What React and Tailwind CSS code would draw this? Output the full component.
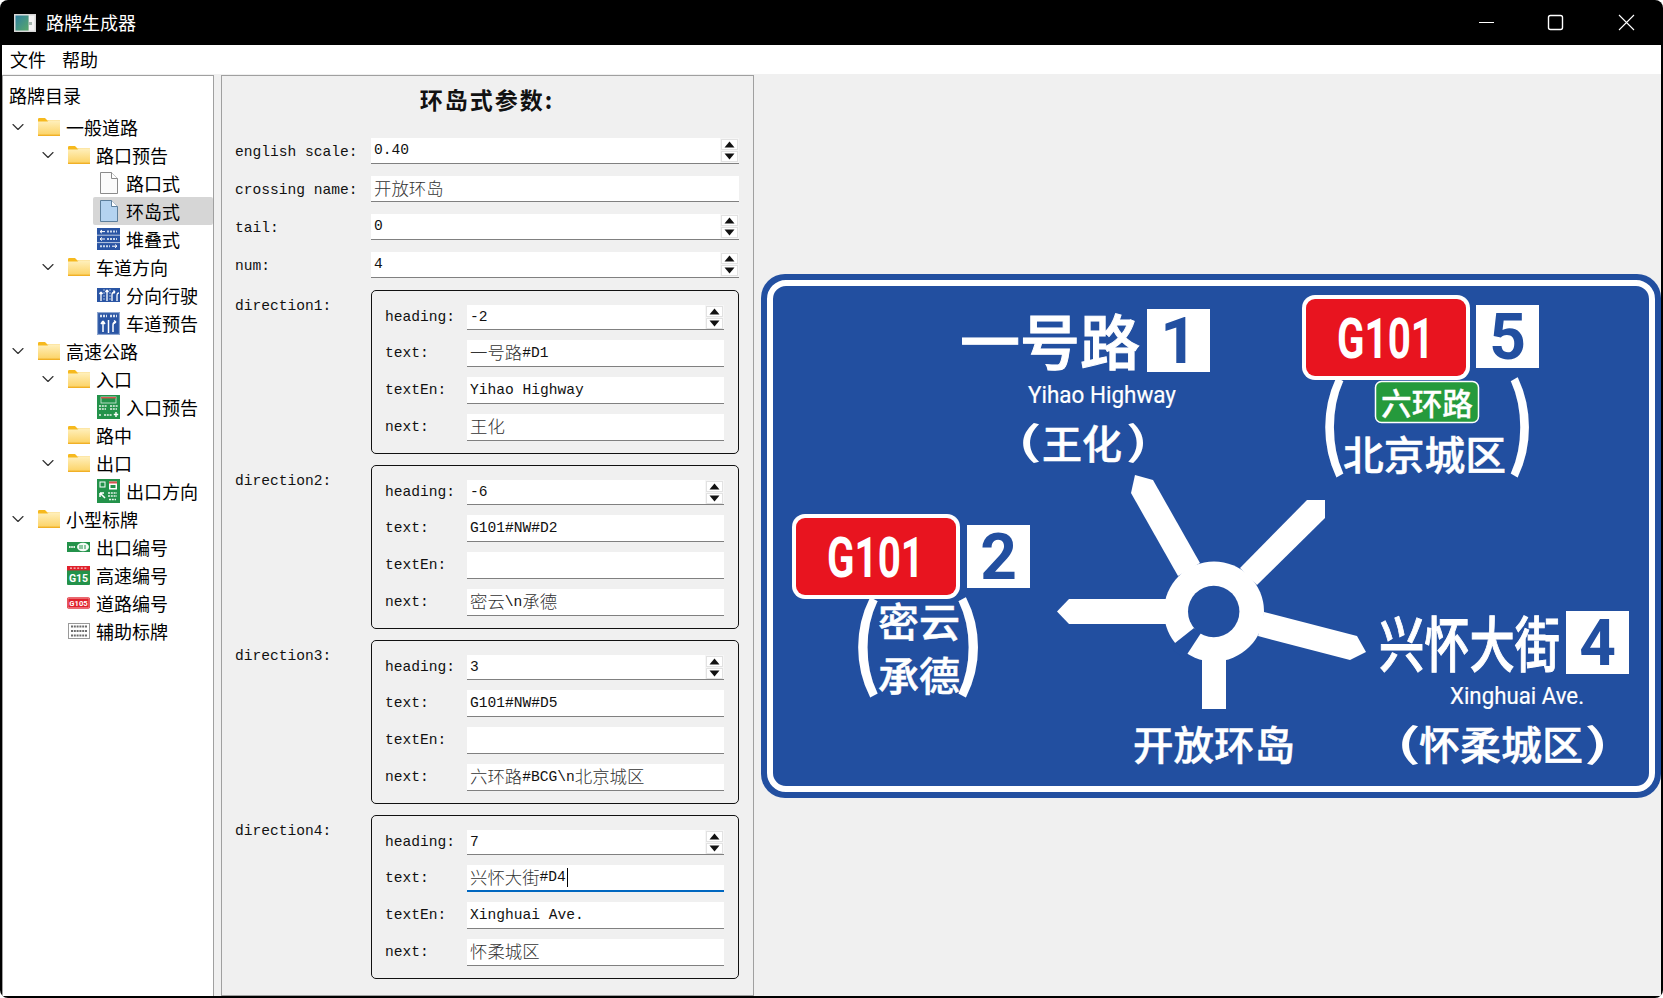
import { ChevronDown } from 'lucide-react';

const CJK = "'Noto Sans CJK SC', sans-serif";
const SIGN_BLUE = '#224fa0';
const SIGN_RED = '#e8141f';
const SIGN_GREEN = '#259a3c';

// ─── Window chrome ──────────────────────────────────────────────────────────

function AppIcon() {
  return (
    <svg width="22" height="18" viewBox="0 0 22 18">
      <defs>
        <linearGradient id="appGrad" x1="0" y1="0" x2="1" y2="1">
          <stop offset="0" stopColor="#2f7fa0" />
          <stop offset="1" stopColor="#58a86a" />
        </linearGradient>
      </defs>
      <rect x="0" y="0" width="22" height="18" fill="#d8d8d8" />
      <rect x="1.5" y="1.5" width="13" height="15" fill="url(#appGrad)" />
      <rect x="15" y="1.5" width="5.5" height="15" fill="#f4f4f4" />
      <rect x="15" y="8" width="3" height="3" fill="#a8b8b0" />
    </svg>
  );
}

function WindowButtons() {
  return (
    <svg width="184" height="45" viewBox="0 0 184 45">
      <path d="M0 22.5H15" stroke="#fff" strokeWidth="1" />
      <rect x="69.5" y="15.5" width="14" height="14" rx="2" fill="none" stroke="#fff" strokeWidth="1.4" />
      <path d="M140 15L155 30M155 15L140 30" stroke="#fff" strokeWidth="1.1" />
    </svg>
  );
}

// ─── Tree icons ─────────────────────────────────────────────────────────────

function FolderIcon() {
  return (
    <svg width="22" height="18" viewBox="0 0 22 18">
      <defs>
        <linearGradient id="folderGrad" x1="0" y1="0" x2="0" y2="1">
          <stop offset="0" stopColor="#fff0bd" />
          <stop offset="1" stopColor="#fcd366" />
        </linearGradient>
      </defs>
      <path d="M0 1.2Q0 0 1.2 0H7L9.5 2.5H22V5H0Z" fill="#f6b91e" />
      <path d="M0 3.5H9.5L11 2.5H22V17.2H0Z" fill="url(#folderGrad)" />
      <rect x="0" y="16.6" width="22" height="1.4" fill="#f1b026" />
    </svg>
  );
}

function FileIcon({ selected }) {
  const fill = selected ? '#b4d3f0' : '#fbfbfb';
  const stroke = selected ? '#5d7f9c' : '#8b8b8b';
  return (
    <svg width="22" height="22" viewBox="0 0 22 22">
      <path d="M2.5 0.5H13.5L19.5 6.5V21.5H2.5Z" fill={fill} stroke={stroke} />
      <path d="M13.5 0.5V6.5H19.5" fill="#fff" stroke={stroke} />
    </svg>
  );
}

function StackedIcon() {
  return (
    <svg width="23" height="22" viewBox="0 0 23 22">
      <rect width="23" height="22" fill="#2a55a4" />
      <path d="M0 7.2H23M0 14.6H23" stroke="#dfe7f3" strokeWidth="0.8" />
      <path d="M3 3.6H8M3 3.6L5 2M3 3.6L5 5.2M3 11H8M3 11L5 9.4M3 11L5 12.6M15 18.2H20M20 18.2L18 16.6M20 18.2L18 19.8" stroke="#fff" strokeWidth="1" fill="none" />
      <path d="M10 3.6H20M10 11H20M3 18.2H13" stroke="#c8d5ea" strokeWidth="2" strokeDasharray="2 1" />
    </svg>
  );
}

function LaneIcon() {
  return (
    <svg width="23" height="14" viewBox="0 0 23 14">
      <rect width="23" height="14" fill="#2a55a4" />
      <path d="M4 13V4M4 4L2.5 6M4 4L5.5 6M10 13V2M10 2L8.5 4M10 2L11.5 4M15 13V7Q15 4 18 4M18 4L16.5 2.5M18 4L16.5 5.5M20 13V8Q20 5 22 5" stroke="#fff" strokeWidth="1.3" fill="none" />
      <path d="M7 1V13M13 1V13" stroke="#c8d5ea" strokeWidth="0.8" strokeDasharray="2 1" />
    </svg>
  );
}

function LanePreviewIcon() {
  return (
    <svg width="23" height="23" viewBox="0 0 23 23">
      <rect width="23" height="23" rx="1" fill="#2a55a4" />
      <rect x="0.7" y="0.7" width="21.6" height="21.6" fill="none" stroke="#b9c9e3" strokeWidth="0.8" />
      <path d="M3 4H10M13 4H20" stroke="#d7e1f0" strokeWidth="2.4" strokeDasharray="2 1" />
      <path d="M6 20V9M6 9L4 12M6 9L8 12M11.5 8V21M16 20V13Q16 10 19 10M19 10L17 8.5M19 10L17 11.5" stroke="#fff" strokeWidth="1.5" fill="none" />
    </svg>
  );
}

function EntranceIcon() {
  return (
    <svg width="23" height="24" viewBox="0 0 23 24">
      <rect width="23" height="24" fill="#23924a" />
      <rect x="4" y="2" width="15" height="6" fill="none" stroke="#d8eee0" strokeWidth="0.8" />
      <rect x="4" y="2" width="15" height="1.4" fill="#d9534f" />
      <path d="M2 11H10M13 11H21M2 14H9M13 14H20M2 20H4.5M7 20H15" stroke="#e6f4ea" strokeWidth="1.5" strokeDasharray="2 0.8" />
      <path d="M19 17V22M16.8 19.5H21.2" stroke="#fff" strokeWidth="1.4" />
    </svg>
  );
}

function ExitIcon() {
  return (
    <svg width="23" height="24" viewBox="0 0 23 24">
      <rect width="23" height="24" fill="#23924a" />
      <rect x="3" y="3" width="5" height="5" fill="none" stroke="#fff" strokeWidth="1" />
      <rect x="12" y="2.5" width="8" height="8" fill="#fff" />
      <rect x="12" y="2.5" width="8" height="2" fill="#d9534f" />
      <rect x="13.5" y="6" width="5" height="3" fill="#23924a" />
      <path d="M8 19L3 14M3 14V18M3 14H7" stroke="#fff" strokeWidth="1.5" fill="none" />
      <path d="M11 14H20M11 17H20M12 20.5H19" stroke="#e6f4ea" strokeWidth="1.6" strokeDasharray="2 0.8" />
    </svg>
  );
}

function ExitNumberIcon() {
  return (
    <svg width="23" height="10" viewBox="0 0 23 10">
      <rect width="23" height="10" fill="#23924a" />
      <path d="M2 5H8" stroke="#dff0e4" strokeWidth="2" strokeDasharray="1.6 0.6" />
      <ellipse cx="16" cy="5" rx="6" ry="4.2" fill="#f4faf6" />
      <path d="M13 3V7M15 3V7M18 3V7" stroke="#23924a" strokeWidth="1" />
    </svg>
  );
}

function HighwayNumberIcon() {
  return (
    <svg width="23" height="19" viewBox="0 0 23 19">
      <rect width="23" height="19" rx="1" fill="#23924a" />
      <rect width="23" height="4.4" fill="#e0202b" />
      <path d="M3 2.2H20" stroke="#f7c9cb" strokeWidth="1.2" strokeDasharray="2 1.6" />
      <text x="11.5" y="16" textAnchor="middle" fontSize="10.5" fontWeight="700" fill="#fff" fontFamily="Roboto, sans-serif">G15</text>
    </svg>
  );
}

function RoadNumberIcon() {
  return (
    <svg width="24" height="12" viewBox="0 0 24 12">
      <rect width="24" height="12" rx="2" fill="#e0202b" />
      <rect x="1" y="1" width="22" height="10" rx="1.4" fill="none" stroke="#f5b6b9" strokeWidth="0.7" />
      <text x="12" y="9" textAnchor="middle" fontSize="8" fontWeight="700" fill="#fff" fontFamily="Roboto, sans-serif">G105</text>
    </svg>
  );
}

function AuxIcon() {
  return (
    <svg width="22" height="16" viewBox="0 0 22 16">
      <rect x="0.5" y="0.5" width="21" height="15" fill="#fff" stroke="#9a9a9a" />
      <path d="M3 3.5H19M3 8H19M3 12.5H19" stroke="#6d6d6d" strokeWidth="2" strokeDasharray="2 0.8" />
    </svg>
  );
}

// ─── Tree ───────────────────────────────────────────────────────────────────

const TREE = [
  { level: 0, open: true, icon: <FolderIcon />, label: '一般道路' },
  { level: 1, open: true, icon: <FolderIcon />, label: '路口预告' },
  { level: 2, icon: <FileIcon />, label: '路口式' },
  { level: 2, icon: <FileIcon selected />, label: '环岛式', selected: true },
  { level: 2, icon: <StackedIcon />, label: '堆叠式' },
  { level: 1, open: true, icon: <FolderIcon />, label: '车道方向' },
  { level: 2, icon: <LaneIcon />, label: '分向行驶' },
  { level: 2, icon: <LanePreviewIcon />, label: '车道预告' },
  { level: 0, open: true, icon: <FolderIcon />, label: '高速公路' },
  { level: 1, open: true, icon: <FolderIcon />, label: '入口' },
  { level: 2, icon: <EntranceIcon />, label: '入口预告' },
  { level: 1, icon: <FolderIcon />, label: '路中' },
  { level: 1, open: true, icon: <FolderIcon />, label: '出口' },
  { level: 2, icon: <ExitIcon />, label: '出口方向' },
  { level: 0, open: true, icon: <FolderIcon />, label: '小型标牌' },
  { level: 1, icon: <ExitNumberIcon />, label: '出口编号' },
  { level: 1, icon: <HighwayNumberIcon />, label: '高速编号' },
  { level: 1, icon: <RoadNumberIcon />, label: '道路编号' },
  { level: 1, icon: <AuxIcon />, label: '辅助标牌' },
];

const INDENT = ['pl-0', 'pl-[30px]', 'pl-[60px]'];

function TreeRow({ level, open, icon, label, selected }) {
  return (
    <div className={`flex h-[28px] items-center ${INDENT[level]}`}>
      <div className="flex w-[30px] shrink-0 items-center justify-center">
        {open && <ChevronDown size={20} strokeWidth={1.4} className="text-[#333]" />}
      </div>
      <div className={`flex h-full flex-1 items-center rounded-[2px] pl-[4px] ${selected ? 'bg-[#d6d6d6]' : ''}`}>
        <div className="flex w-[23px] shrink-0 items-center justify-center">{icon}</div>
        <span className="mb-[1px] ml-[6px] text-[18px] leading-none text-black">{label}</span>
      </div>
    </div>
  );
}

function Tree() {
  return (
    <div className="h-full w-[212px] shrink-0 border border-b-0 border-[#a0a0a0] bg-white pt-[9px]">
      <div className="flex h-[28px] items-center pb-[9px] pl-[6px] text-[18px] leading-none text-black">路牌目录</div>
      {TREE.map(item => (
        <TreeRow key={item.label} {...item} />
      ))}
    </div>
  );
}

// ─── Form ───────────────────────────────────────────────────────────────────

/** SimSun look-alike: latin runs in mono, Chinese runs one size up */
function mix(str) {
  return str.split(/([\u4e00-\u9fa5]+)/).map((part, i) =>
    /[\u4e00-\u9fa5]/.test(part)
      ? <span key={i} className="inline-block -translate-y-[1px] font-['Noto_Sans_CJK_SC'] text-[17.4px] font-light text-[#333]">{part}</span>
      : <span key={i}>{part}</span>
  );
}

function Spin() {
  return (
    <div className="flex h-full w-[19px] shrink-0 flex-col justify-center gap-[1px] bg-[#f6f6f6] px-[1px]">
      {[0, 1].map(i => (
        <div key={i} className="flex h-[11px] items-center justify-center border border-[#e2e2e2] bg-white">
          <svg width="11" height="7" viewBox="0 0 11 7">
            <path d={i === 0 ? 'M5.5 0.5L10.5 6.5H0.5Z' : 'M0.5 0.5H10.5L5.5 6.5Z'} fill="#111" />
          </svg>
        </div>
      ))}
    </div>
  );
}

function Field({ value, spin, focused, className }) {
  return (
    <div
      className={`flex flex-1 items-center bg-white font-['Liberation_Mono'] text-[14.6px] leading-none text-[#111] ${
        focused ? 'border-b-2 border-[#0067c0]' : 'border-b border-[#808080]'
      } ${className}`}
    >
      <div className="flex flex-1 items-center whitespace-pre pl-[3px]">
        {mix(value)}
        {focused && <span className="ml-[1px] h-[19px] w-[1px] bg-black" />}
      </div>
      {spin && <Spin />}
    </div>
  );
}

function Label({ children, className }) {
  return (
    <div className={`shrink-0 font-['Liberation_Mono'] text-[14.6px] leading-none text-[#111] ${className}`}>
      {children}
    </div>
  );
}

function FormRow({ label, value, spin }) {
  return (
    <div className="flex items-center">
      <Label className="w-[136px] pt-[2px]">{label}</Label>
      <Field value={value} spin={spin} className="h-[26px]" />
    </div>
  );
}

const DIRECTIONS = [
  { heading: '-2', text: '一号路#D1', textEn: 'Yihao Highway', next: '王化' },
  { heading: '-6', text: 'G101#NW#D2', textEn: '', next: '密云\\n承德' },
  { heading: '3', text: 'G101#NW#D5', textEn: '', next: '六环路#BCG\\n北京城区' },
  { heading: '7', text: '兴怀大街#D4', textEn: 'Xinghuai Ave.', next: '怀柔城区', focused: true },
];

function DirectionGroup({ index, heading, text, textEn, next, focused }) {
  const rows = [
    ['text:', text, focused],
    ['textEn:', textEn],
    ['next:', next],
  ];
  return (
    <div className="flex">
      <Label className="w-[136px] pt-[9px]">{`direction${index}:`}</Label>
      <div className="flex h-[164px] flex-1 flex-col gap-[10px] rounded-[5px] border border-[#111] py-[14px] pl-[13px] pr-[14px]">
        <div className="flex items-center">
          <Label className="w-[82px]">heading:</Label>
          <Field value={heading} spin className="h-[25px]" />
        </div>
        {rows.map(([label, value, isFocused]) => (
          <div key={label} className="flex items-center">
            <Label className="w-[82px]">{label}</Label>
            <Field value={value} focused={isFocused} className="h-[27px]" />
          </div>
        ))}
      </div>
    </div>
  );
}

function ParamForm() {
  return (
    <div className="h-full w-[533px] shrink-0 border border-[#a0a0a0] pl-[13px] pr-[14px]">
      <div className="flex h-[62px] items-center justify-center pb-[16px] font-['Noto_Sans_CJK_SC'] text-[23px] font-bold leading-none tracking-[2px] text-[#111]">
        环岛式参数:
      </div>
      <div className="flex flex-col gap-[12px]">
        <FormRow label="english scale:" value="0.40" spin />
        <FormRow label="crossing name:" value="开放环岛" />
        <FormRow label="tail:" value="0" spin />
        <FormRow label="num:" value="4" spin />
        <div className="flex flex-col gap-[11px]">
          {DIRECTIONS.map((d, i) => (
            <DirectionGroup key={i} index={i + 1} {...d} />
          ))}
        </div>
      </div>
    </div>
  );
}

// ─── Road sign ──────────────────────────────────────────────────────────────

function SignText({ x, y, w, size, children, weight = 500, fill = '#fff', font = CJK, stroke = 0.5 }) {
  return (
    <text
      x={x}
      y={y}
      fontSize={size}
      fontWeight={weight}
      fill={fill}
      stroke={fill}
      strokeWidth={stroke}
      fontFamily={font}
      textLength={w}
      lengthAdjust="spacingAndGlyphs"
    >
      {children}
    </text>
  );
}

/** Tall bracket stretched over stacked text; left/right are ink edges */
function Paren({ left, right, top, bottom, glyph, thick = 2.5 }) {
  const sy = (bottom - top) / 100;
  const sx = (right - left) / 18;
  return (
    <text
      transform={`translate(${(left + right) / 2} ${bottom - 20.5 * sy}) scale(${sx} ${sy})`}
      textAnchor="middle"
      fontSize="100"
      fontWeight="500"
      fill="#fff"
      stroke="#fff"
      strokeWidth={thick}
      fontFamily={CJK}
    >
      {glyph}
    </text>
  );
}

function NumberBox({ x, y, digit, dy = 54 }) {
  return (
    <g>
      <rect x={x} y={y} width="63" height="63" fill="#fff" />
      <text
        x={x + 31.5}
        y={y + dy}
        textAnchor="middle"
        fontSize="64"
        fontWeight="700"
        fill={SIGN_BLUE}
        fontFamily="Roboto, sans-serif"
      >
        {digit}
      </text>
    </g>
  );
}

function RouteShield({ x, y }) {
  return (
    <g>
      <rect x={x} y={y} width="168" height="85" rx="13" fill="#fff" />
      <rect x={x + 4} y={y + 4} width="160" height="77" rx="9" fill={SIGN_RED} />
      <SignText x={x + 35} y={y + 63} w={97} size={56} weight={700} font="Roboto, sans-serif" stroke={0}>G101</SignText>
    </g>
  );
}

function RoadSign() {
  return (
    <svg width="900" height="524" viewBox="761 273 900 524">
      <rect x="761" y="273" width="900" height="524" rx="24" fill={SIGN_BLUE} />
      <rect x="770" y="282" width="882" height="506" rx="16" fill="none" stroke="#fff" strokeWidth="6" />

      {/* roundabout */}
      <g fill="#fff">
        <path d="M1135 474L1153 479L1200 562L1178 575L1131 492Z" />
        <path d="M1307 499H1325V517L1257 584L1240 567Z" />
        <path d="M1264 611L1357 635L1366 651L1350 659L1258 635Z" />
        <path d="M1057 610.5L1069 598H1170V623H1069Z" />
        <path d="M1202 640H1226V708H1202Z" />
        <circle cx="1214" cy="610.5" r="50" />
      </g>
      <path d="M1194 627L1170 646L1184 658L1201 632Z" fill={SIGN_BLUE} />
      <circle cx="1213.7" cy="610.5" r="25.7" fill={SIGN_BLUE} />

      {/* 1 */}
      <SignText x={960} y={364} w={180} size={60} stroke={1}>一号路</SignText>
      <NumberBox x={1147} y={308} digit="1" />
      <SignText x={1028} y={402} w={148} size={23} weight={400} font="Roboto, sans-serif" stroke={0.2}>Yihao Highway</SignText>
      <Paren left={1023} right={1036} top={423} bottom={462} glyph="(" thick={0} />
      <SignText x={1042} y={458} w={80} size={40}>王化</SignText>
      <Paren left={1131} right={1143} top={423} bottom={462} glyph=")" thick={0} />

      {/* 5 */}
      <RouteShield x={1302} y={294} />
      <NumberBox x={1476} y={304} digit="5" />
      <Paren left={1326} right={1339} top={380} bottom={475} glyph="(" />
      <rect x="1375.5" y="380.5" width="103" height="41" rx="6" fill={SIGN_GREEN} stroke="#fff" strokeWidth="1.5" />
      <SignText x={1381} y={414} w={92} size={31} stroke={0.3}>六环路</SignText>
      <SignText x={1343} y={469} w={163} size={40}>北京城区</SignText>
      <Paren left={1515} right={1528} top={380} bottom={475} glyph=")" />

      {/* 2 */}
      <RouteShield x={792} y={513} />
      <NumberBox x={967} y={524} digit="2" />
      <Paren left={859} right={873} top={600} bottom={695} glyph="(" />
      <SignText x={878} y={636} w={82} size={40}>密云</SignText>
      <SignText x={878} y={690} w={82} size={40}>承德</SignText>
      <Paren left={963} right={977} top={600} bottom={695} glyph=")" />

      {/* 4 */}
      <SignText x={1379} y={666} w={181} size={60} stroke={1}>兴怀大街</SignText>
      <NumberBox x={1566} y={610} digit="4" />
      <SignText x={1450} y={703} w={134} size={23} weight={400} font="Roboto, sans-serif" stroke={0.2}>Xinghuai Ave.</SignText>
      <Paren left={1402} right={1415} top={725} bottom={764} glyph="(" thick={0} />
      <SignText x={1419} y={759} w={164} size={40}>怀柔城区</SignText>
      <Paren left={1590} right={1603} top={725} bottom={764} glyph=")" thick={0} />

      {/* 3 */}
      <SignText x={1133} y={759} w={162} size={40}>开放环岛</SignText>
    </svg>
  );
}

// ─── App ────────────────────────────────────────────────────────────────────

export default function App() {
  return (
    <div className="h-[998px] w-[1663px] overflow-hidden bg-white font-['Noto_Sans_CJK_SC','Liberation_Sans',sans-serif]">
      <div className="flex h-full flex-col overflow-hidden rounded-[8px] bg-black">
        {/* Title bar */}
        <div className="flex h-[45px] shrink-0 items-center justify-between text-white">
          <div className="flex items-center pl-[14px]">
            <AppIcon />
            <span className="mb-[1px] ml-[10px] text-[18px] leading-none">路牌生成器</span>
          </div>
          <WindowButtons />
        </div>

        <div className="mb-[2px] ml-[2px] mr-[2px] flex min-h-0 flex-1 flex-col bg-[#f0f0f0]">
          {/* Menu bar */}
          <div className="flex h-[29px] shrink-0 items-center gap-[16px] bg-white pb-[1px] pl-[8px] text-[18px] leading-none text-black">
            <span>文件</span>
            <span>帮助</span>
          </div>

          {/* Panes */}
          <div className="flex min-h-0 flex-1 pt-[1px]">
            <Tree />
            <div className="w-[7px] shrink-0" />
            <ParamForm />
            <div className="flex h-full flex-1 items-center justify-end">
              <RoadSign />
            </div>
          </div>
        </div>
      </div>
    </div>
  );
}
